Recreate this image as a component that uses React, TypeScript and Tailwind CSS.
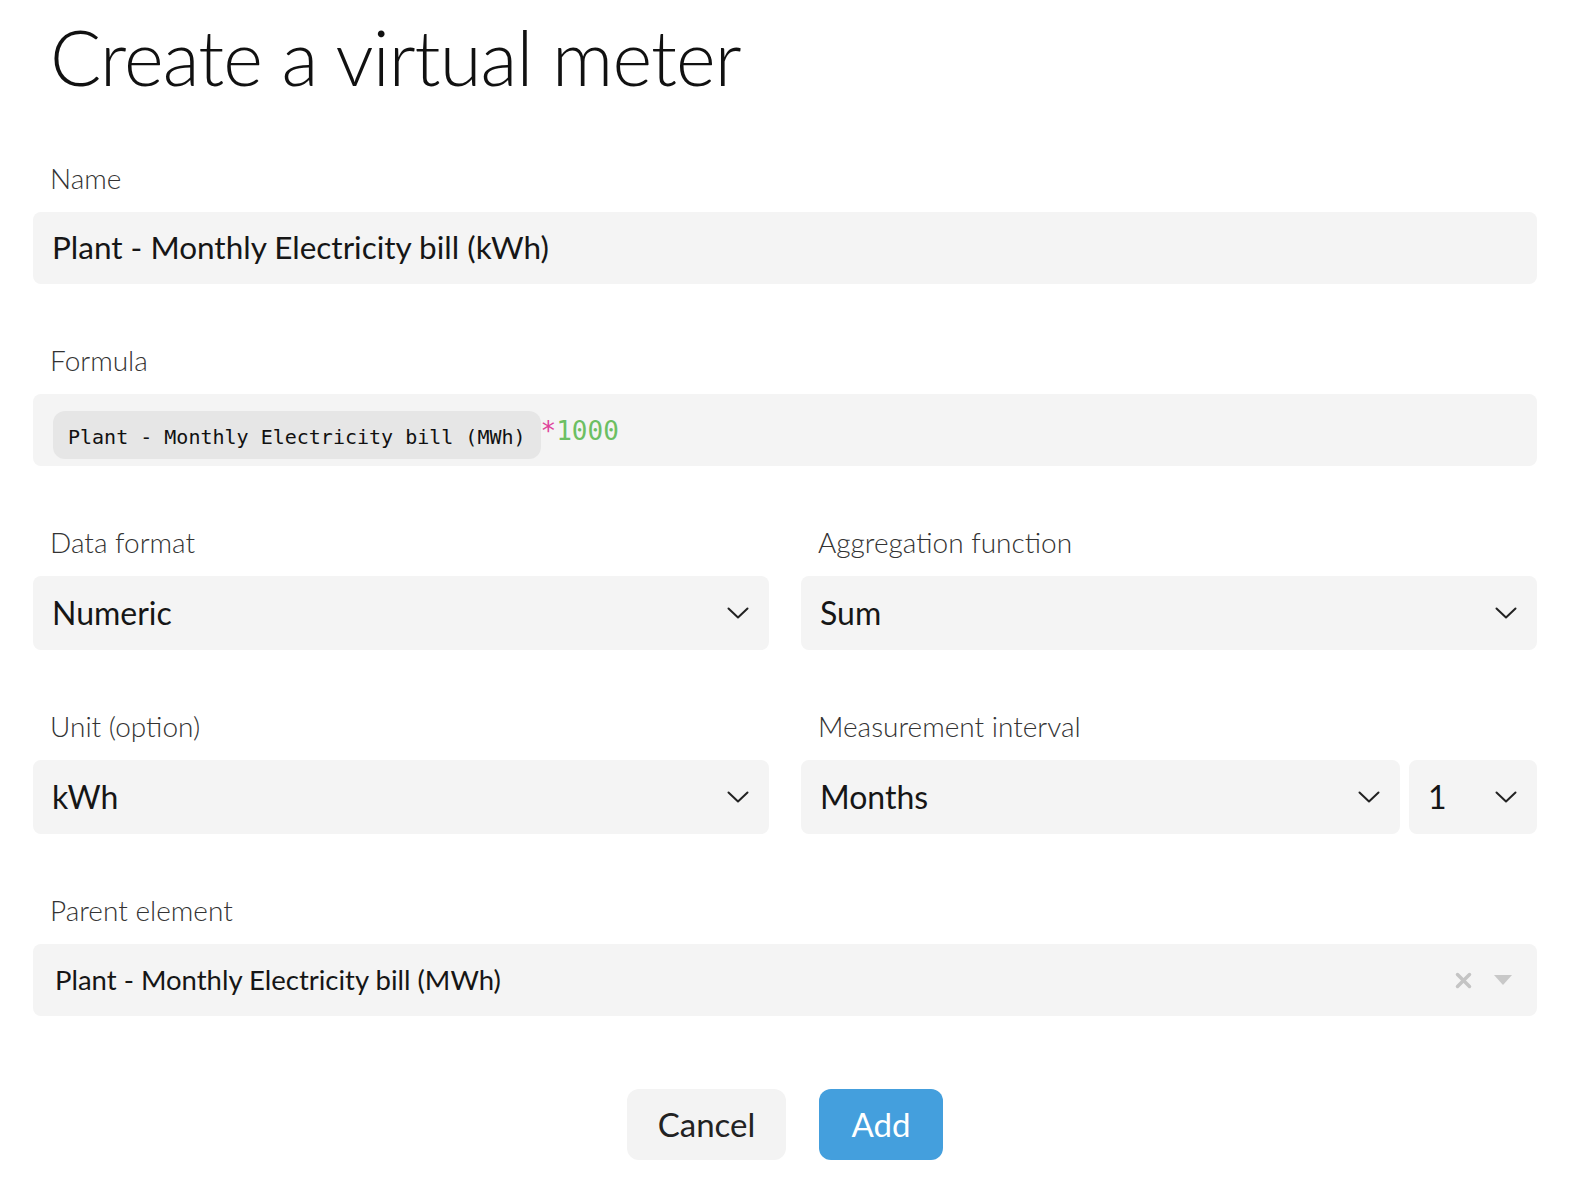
import { ReactNode } from "react";

const FONT = "font-['Lato','Noto_Sans',sans-serif]";
const MONO = "font-['DejaVu_Sans_Mono','Liberation_Mono',monospace]";

function Chevron() {
  return (
    <svg width="22" height="12" viewBox="0 0 22 12" fill="none" className="shrink-0">
      <path d="M1.5 1.5 L11 10.5 L20.5 1.5" stroke="#222" strokeWidth="2" strokeLinecap="round" strokeLinejoin="round" />
    </svg>
  );
}

function Field({ label, children }: { label: string; children: ReactNode }) {
  return (
    <div className="flex flex-col">
      <div className="h-[36px] mb-[16px] pl-[17px] text-[28px] font-light leading-[36px] text-[#333]">{label}</div>
      {children}
    </div>
  );
}

function Select({ value, className = "" }: { value: string; className?: string }) {
  return (
    <div className={`h-[74px] flex items-center justify-between pl-[19px] pr-[20px] rounded-lg bg-[#f4f4f4] ${className}`}>
      <span className="text-[32px] text-[#161616]">{value}</span>
      <Chevron />
    </div>
  );
}

export default function App() {
  return (
    <div className={`min-h-[1180px] bg-white pl-[33px] pr-[45px] ${FONT}`}>
      <h1 className="pt-[19px] pl-[17px] text-[76px] leading-none font-light tracking-[-0.9px] text-[#111]">
        Create a virtual meter
      </h1>

      <div className="mt-[65px] flex flex-col gap-[58px]">
        <Field label="Name">
          <div className="h-[72px] flex items-center pl-[19px] rounded-lg bg-[#f4f4f4] text-[31.5px] text-[#161616]">
            Plant - Monthly Electricity bill (kWh)
          </div>
        </Field>

        <Field label="Formula">
          <div className="h-[72px] flex items-end pl-[20px] pb-[7px] rounded-lg bg-[#f4f4f4]">
            <span className={`h-[48px] flex items-center px-[15px] pt-[3px] rounded-xl bg-[#e6e6e6] text-[20px] text-[#111] ${MONO}`}>
              Plant - Monthly Electricity bill (MWh)
            </span>
            <span className={`mb-[15px] text-[26px] leading-none ${MONO}`}>
              <span className="text-[#e0439b]">*</span>
              <span className="text-[#6cbf62]">1000</span>
            </span>
          </div>
        </Field>

        <div className="grid grid-cols-2 gap-[32px]">
          <Field label="Data format">
            <Select value="Numeric" />
          </Field>
          <Field label="Aggregation function">
            <Select value="Sum" />
          </Field>
        </div>

        <div className="grid grid-cols-2 gap-[32px]">
          <Field label="Unit (option)">
            <Select value="kWh" />
          </Field>
          <Field label="Measurement interval">
            <div className="flex gap-[9px]">
              <Select value="Months" className="flex-1" />
              <Select value="1" className="w-[128px]" />
            </div>
          </Field>
        </div>

        <Field label="Parent element">
          <div className="h-[72px] flex items-center justify-between pl-[22px] pr-[25px] rounded-lg bg-[#f4f4f4]">
            <span className="text-[27.5px] text-[#161616]">Plant - Monthly Electricity bill (MWh)</span>
            <div className="flex items-center gap-[22px]">
              <svg width="17" height="17" viewBox="0 0 17 17">
                <path d="M2.5 2.5 L14.5 14.5 M14.5 2.5 L2.5 14.5" stroke="#c4c4c4" strokeWidth="3.5" strokeLinecap="round" />
              </svg>
              <svg width="18" height="10" viewBox="0 0 18 10">
                <path d="M0 0 H18 L9 10 Z" fill="#c8c8c8" />
              </svg>
            </div>
          </div>
        </Field>
      </div>

      <div className="mt-[73px] flex justify-center gap-[33px]">
        <button className="w-[159px] h-[71px] rounded-xl bg-[#f3f3f3] text-[33px] text-[#222]">Cancel</button>
        <button className="w-[124px] h-[71px] rounded-xl bg-[#449fdd] text-[33px] text-white">Add</button>
      </div>
    </div>
  );
}
